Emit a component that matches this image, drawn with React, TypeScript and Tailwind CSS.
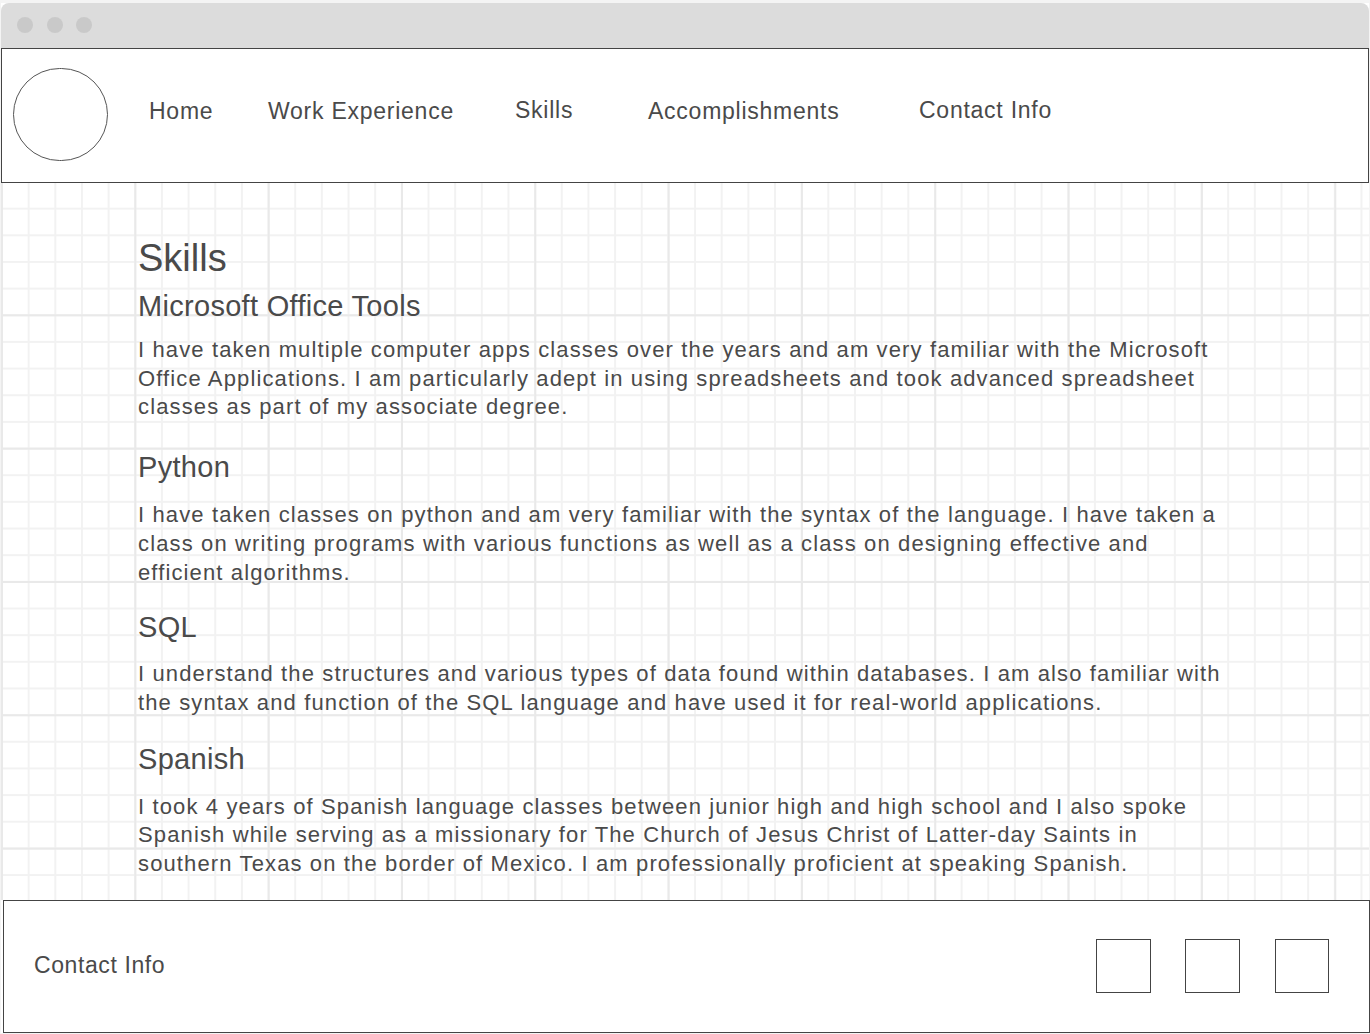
import React from 'react';

const navItems = [
  { label: 'Home', width: 'w-[119px]', offset: 'mt-0' },
  { label: 'Work Experience', width: 'w-[247px]', offset: 'mt-0' },
  { label: 'Skills', width: 'w-[133px]', offset: '-mt-px' },
  { label: 'Accomplishments', width: 'w-[271px]', offset: 'mt-0' },
  { label: 'Contact Info', width: 'w-auto', offset: '-mt-px' },
];

const skills = [
  {
    title: 'Microsoft Office Tools',
    body: 'I have taken multiple computer apps classes over the years and am very familiar with the Microsoft Office Applications. I am particularly adept in using spreadsheets and took advanced spreadsheet classes as part of my associate degree.',
    headGap: 'mt-[9px]',
    bodyGap: 'mt-[13px]',
  },
  {
    title: 'Python',
    body: 'I have taken classes on python and am very familiar with the syntax of the language. I have taken a class on writing programs with various functions as well as a class on designing effective and efficient algorithms.',
    headGap: 'mt-[28px]',
    bodyGap: 'mt-[17px]',
  },
  {
    title: 'SQL',
    body: 'I understand the structures and various types of data found within databases. I am also familiar with the syntax and function of the SQL language and have used it for real-world applications.',
    headGap: 'mt-[23px]',
    bodyGap: 'mt-[16px]',
  },
  {
    title: 'Spanish',
    body: 'I took 4 years of Spanish language classes between junior high and high school and I also spoke Spanish while serving as a missionary for The Church of Jesus Christ of Latter-day Saints in southern Texas on the border of Mexico. I am professionally proficient at speaking Spanish.',
    headGap: 'mt-[24px]',
    bodyGap: 'mt-[17px]',
  },
];

const App: React.FC = () => {
  return (
    <div className="w-[1370px] h-[1034px] overflow-hidden bg-[#f4f4f4] pt-[3px] pl-px font-['Liberation_Sans',Arial,sans-serif] text-[#4a4a4a]">
      <div className="w-[1368px] h-[1030px] flex flex-col bg-white">
        {/* Window chrome */}
        <div className="h-[45px] shrink-0 rounded-t-[8px] bg-[#dcdcdc] flex items-center gap-[13.5px] pl-[16px] pb-[2px]">
          <span className="w-[16px] h-[16px] rounded-full bg-[#c9c9c9]" />
          <span className="w-[16px] h-[16px] rounded-full bg-[#c9c9c9]" />
          <span className="w-[16px] h-[16px] rounded-full bg-[#c9c9c9]" />
        </div>

        {/* Header */}
        <header className="h-[135px] shrink-0 border border-[#444] bg-white flex items-start">
          <div className="ml-[11px] mt-[19px] w-[95px] h-[93px] rounded-full border border-[#555]" />
          <nav className="ml-[41px] mt-[48px] flex items-start text-[23px] leading-[28px] tracking-[0.75px]">
            {navItems.map((item) => (
              <div key={item.label} className={`${item.width} ${item.offset} shrink-0 whitespace-nowrap`}>
                {item.label}
              </div>
            ))}
          </nav>
        </header>

        {/* Content on grid paper */}
        <main className="flex-1 bg-white bg-[linear-gradient(to_right,#e9e9e9_2px,transparent_2px),linear-gradient(to_bottom,#e9e9e9_2px,transparent_2px),linear-gradient(to_right,#f2f2f2_2px,transparent_2px),linear-gradient(to_bottom,#f2f2f2_2px,transparent_2px)] bg-[size:133.33px_133.33px,133.33px_133.33px,26.667px_26.667px,26.667px_26.667px] bg-[position:0px_-2px] pl-[137px] pt-[53px]">
          <h1 className="text-[38px] leading-[44px]">Skills</h1>
          {skills.map((s) => (
            <section key={s.title}>
              <h2 className={`${s.headGap} text-[29px] leading-[34px] tracking-[0.3px]`}>{s.title}</h2>
              <p className={`${s.bodyGap} w-[1090px] text-[22px] leading-[28.7px] tracking-[1.13px]`}>{s.body}</p>
            </section>
          ))}
        </main>

        {/* Footer */}
        <footer className="w-[1367px] h-[133px] shrink-0 ml-[2px] border border-[#444] bg-white flex items-center justify-between pl-[30px] pr-[40px]">
          <span className="-mt-[2px] text-[23px] tracking-[0.6px]">Contact Info</span>
          <div className="flex items-center gap-[34px] -mt-px">
            <div className="w-[55px] h-[54px] border-[1.5px] border-[#444]" />
            <div className="w-[55px] h-[54px] border-[1.5px] border-[#444]" />
            <div className="ml-px w-[54px] h-[54px] border-[1.5px] border-[#444]" />
          </div>
        </footer>
      </div>
    </div>
  );
};

export default App;
